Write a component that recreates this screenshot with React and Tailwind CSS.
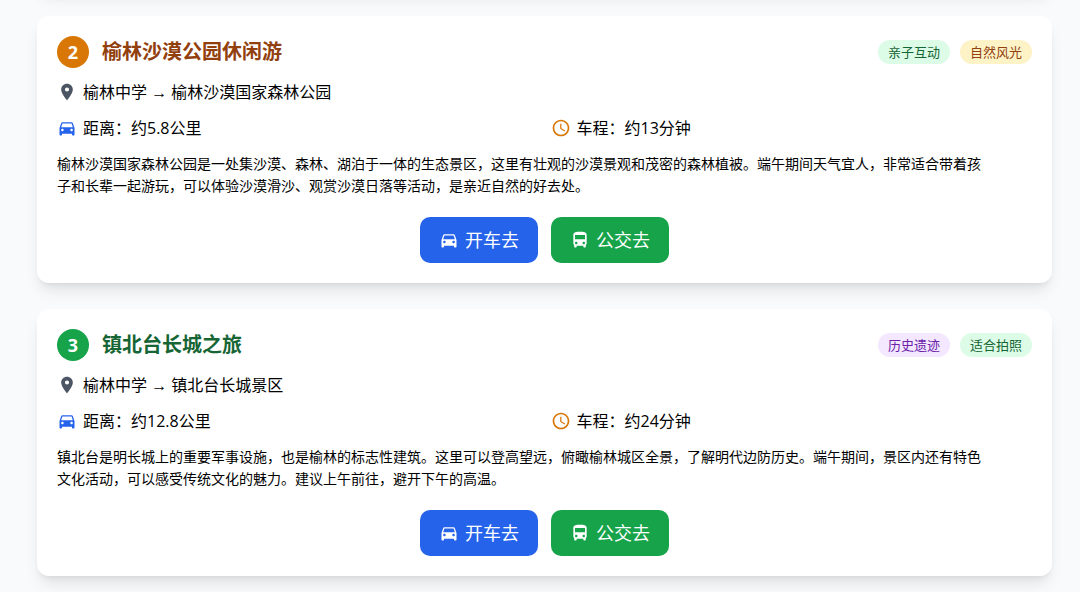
import { MdLocationOn, MdDirectionsCar, MdSchedule, MdDirectionsBus } from 'react-icons/md'

const routes = [
  {
    id: 2,
    title: '榆林沙漠公园休闲游',
    badgeClass: 'bg-[#d97706]',
    titleClass: 'text-[#92400e]',
    tags: [
      { label: '亲子互动', className: 'bg-[#dcfce7] text-[#166534]' },
      { label: '自然风光', className: 'bg-[#fef3c7] text-[#92400e]' },
    ],
    from: '榆林中学',
    to: '榆林沙漠国家森林公园',
    distance: '约5.8公里',
    duration: '约13分钟',
    description:
      '榆林沙漠国家森林公园是一处集沙漠、森林、湖泊于一体的生态景区，这里有壮观的沙漠景观和茂密的森林植被。端午期间天气宜人，非常适合带着孩子和长辈一起游玩，可以体验沙漠滑沙、观赏沙漠日落等活动，是亲近自然的好去处。',
  },
  {
    id: 3,
    title: '镇北台长城之旅',
    badgeClass: 'bg-[#16a34a]',
    titleClass: 'text-[#166534]',
    tags: [
      { label: '历史遗迹', className: 'bg-[#f3e8ff] text-[#6b21a8]' },
      { label: '适合拍照', className: 'bg-[#dcfce7] text-[#166534]' },
    ],
    from: '榆林中学',
    to: '镇北台长城景区',
    distance: '约12.8公里',
    duration: '约24分钟',
    description:
      '镇北台是明长城上的重要军事设施，也是榆林的标志性建筑。这里可以登高望远，俯瞰榆林城区全景，了解明代边防历史。端午期间，景区内还有特色文化活动，可以感受传统文化的魅力。建议上午前往，避开下午的高温。',
  },
]

function InfoLine({ icon: Icon, iconClass, children }) {
  return (
    <div className="flex items-center gap-1.5 leading-6">
      <Icon size={20} className={`shrink-0 ${iconClass}`} />
      <span>{children}</span>
    </div>
  )
}

function RouteButton({ icon: Icon, className, children }) {
  return (
    <button
      type="button"
      className={`flex h-[46px] items-center gap-1.5 rounded-[10px] px-[19px] text-lg text-white ${className}`}
    >
      <Icon size={20} className="shrink-0" />
      <span>{children}</span>
    </button>
  )
}

function RouteCard({ route }) {
  return (
    <article className="rounded-xl bg-white p-5 shadow-lg">
      <div className="flex items-center justify-between">
        <div className="flex items-center gap-[13px]">
          <span
            className={`flex size-8 items-center justify-center rounded-full text-lg font-bold text-white ${route.badgeClass}`}
          >
            {route.id}
          </span>
          <h2 className={`text-xl font-bold ${route.titleClass}`}>{route.title}</h2>
        </div>
        <div className="flex gap-2.5">
          {route.tags.map((tag) => (
            <span key={tag.label} className={`rounded-full px-2.5 text-[13px] leading-6 ${tag.className}`}>
              {tag.label}
            </span>
          ))}
        </div>
      </div>

      <div className="mt-3">
        <InfoLine icon={MdLocationOn} iconClass="text-[#4b5563]">
          {route.from} <span className="font-['Liberation_Sans',sans-serif] leading-none">→</span> {route.to}
        </InfoLine>
      </div>
      <div className="mt-3 grid grid-cols-2 gap-3">
        <InfoLine icon={MdDirectionsCar} iconClass="text-[#2563eb]">
          距离：{route.distance}
        </InfoLine>
        <InfoLine icon={MdSchedule} iconClass="text-[#d97706]">
          车程：{route.duration}
        </InfoLine>
      </div>

      <p className="mt-[13px] pr-12 text-sm leading-[22px]">{route.description}</p>

      <div className="mt-5 flex justify-center gap-[13px]">
        <RouteButton icon={MdDirectionsCar} className="bg-[#2563eb]">
          开车去
        </RouteButton>
        <RouteButton icon={MdDirectionsBus} className="bg-[#16a34a]">
          公交去
        </RouteButton>
      </div>
    </article>
  )
}

export default function App() {
  return (
    <main
      lang="zh-CN"
      className="flex h-screen flex-col gap-[26px] overflow-hidden bg-[#f8fafc] pr-7 pl-[37px] font-['Open_Sans','Noto_Sans_CJK_SC',sans-serif] text-base text-black"
    >
      {/* Tail of the card scrolled off above */}
      <div className="-mt-[34px] h-6 shrink-0 rounded-xl bg-white shadow-lg" />
      {routes.map((route) => (
        <RouteCard key={route.id} route={route} />
      ))}
    </main>
  )
}
